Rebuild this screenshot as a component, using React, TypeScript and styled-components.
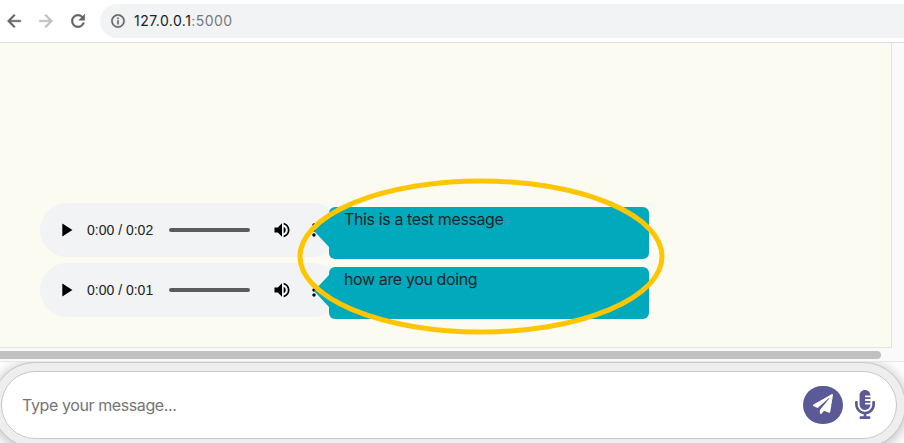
import React from 'react';
import styled, { createGlobalStyle } from 'styled-components';
import { FaPaperPlane, FaMicrophoneAlt } from 'react-icons/fa';
import {
  MdArrowBack,
  MdArrowForward,
  MdRefresh,
  MdInfoOutline,
  MdPlayArrow,
  MdVolumeUp,
  MdMoreVert,
} from 'react-icons/md';

const GlobalStyle = createGlobalStyle`
  * { box-sizing: border-box; }
  html, body { margin: 0; padding: 0; overflow: hidden; background: #fff; }
  body { font-family: Inter, "Liberation Sans", sans-serif; }
`;

const Page = styled.div`
  width: 904px;
  height: 443px;
  overflow: hidden;
  display: flex;
  flex-direction: column;
`;

const Toolbar = styled.header`
  flex: none;
  height: 43px;
  padding: 4px 0 4px 4px;
  display: flex;
  border-bottom: 1px solid #dadce0;
  background: #fff;
`;

const NavButton = styled.button<{ $muted?: boolean }>`
  width: 20px;
  height: 34px;
  margin-right: 12px;
  padding: 0;
  border: 0;
  background: none;
  display: grid;
  place-items: center;
  color: ${(p) => (p.$muted ? '#babcbe' : '#5f6368')};
  svg { display: block; }
  path:not([fill='none']) { stroke: currentColor; stroke-width: 0.6; }
`;

const AddressBar = styled.div`
  flex: 1;
  height: 34px;
  padding-left: 10px;
  display: flex;
  align-items: center;
  gap: 8px;
  border-radius: 17px 0 0 17px;
  background: #f1f3f4;
  color: #5f6368;
  path:not([fill='none']) { stroke: currentColor; stroke-width: 0.5; }
`;

const Url = styled.span`
  font-size: 14px;
  line-height: 20px;
  letter-spacing: 0.45px;
  color: #75797d;
  b { font-weight: 400; color: #202124; }
`;

const Scroller = styled.main`
  flex: none;
  height: 319px;
  background: #fafafa;
  border-bottom: 1px solid #e8e8e8;
`;

const Chat = styled.section`
  position: relative;
  width: 892px;
  height: 305px;
  padding: 160px 0 0 40px;
  display: flex;
  flex-direction: column;
  gap: 6px;
  background: #fbfbf2;
  border-right: 1px solid #e3e3e0;
  border-bottom: 1px solid #e3e3e0;
`;

const MessageRow = styled.div`
  display: flex;
  height: 54px;
`;

const Player = styled.div`
  width: 300px;
  height: 54px;
  padding-left: 15px;
  display: flex;
  align-items: center;
  border-radius: 27px;
  background: #f1f3f4;
  color: #000;
  svg { flex: none; display: block; }
`;

const Time = styled.span`
  width: 67px;
  margin: 0 15px 0 10px;
  font: 14px/20px "Liberation Sans", sans-serif;
  white-space: nowrap;
  color: #222;
`;

const Track = styled.div`
  width: 81px;
  height: 4px;
  margin-right: 22px;
  border-radius: 2px;
  background: #5b5b5c;
`;

const Menu = styled(MdMoreVert)`
  margin-left: 12px;
`;

const Bubble = styled.div`
  position: relative;
  width: 320px;
  height: 52px;
  margin: 4px 0 0 -11px;
  padding-left: 15px;
  border-radius: 6px;
  background: #00a9bc;
  color: #212529;
  font-size: 16px;
  line-height: 24px;
  letter-spacing: -0.38px;
  &::before {
    content: '';
    position: absolute;
    left: -15px;
    top: 8px;
    border: 16px solid transparent;
    border-left-width: 0;
    border-right: 15px solid #00a9bc;
  }
`;

const Highlight = styled.svg`
  position: absolute;
  left: 297px;
  top: 135px;
  pointer-events: none;
`;

const ScrollThumb = styled.div`
  width: 881px;
  height: 8px;
  margin-top: 3px;
  border-radius: 0 4px 4px 0;
  background: #c1c1c1;
`;

const ComposerFrame = styled.div`
  flex: none;
  width: 914px;
  height: 86px;
  margin-left: -8px;
  padding: 8px;
  border: 1px solid #c8c8c8;
  border-radius: 43px;
  background: #eee;
  box-shadow: 0 2px 14px rgba(0, 0, 0, 0.3);
`;

const Footer = styled.footer`
  flex: 1;
  overflow: hidden;
  background: #fff;
`;

const Composer = styled.div`
  height: 68px;
  padding: 0 21px 0 20px;
  display: flex;
  align-items: center;
  border: 1px solid #c8c8c8;
  border-radius: 34px;
  background: #fff;
`;

const Input = styled.input`
  flex: 1;
  min-width: 0;
  padding: 0;
  border: 0;
  outline: 0;
  background: none;
  font: 16px/24px Inter, "Liberation Sans", sans-serif;
  letter-spacing: -0.4px;
  &::placeholder { color: #757575; opacity: 1; }
`;

const SendButton = styled.button`
  width: 40px;
  height: 38px;
  padding: 0 0 3px;
  border: 0;
  border-radius: 19px;
  display: grid;
  place-items: center;
  background: #5b5996;
  color: #fff;
`;

const MicButton = styled.button`
  width: 20px;
  height: 29px;
  margin: 0 0 2px 12px;
  padding: 0;
  border: 0;
  background: none;
  color: #5b5996;
  svg { display: block; width: 20px; height: 29px; }
`;

const messages = [
  { text: 'This is a test message', time: '0:00 / 0:02' },
  { text: 'how are you doing', time: '0:00 / 0:01' },
];

export default function App() {
  return (
    <Page>
      <GlobalStyle />
      <Toolbar>
        <NavButton aria-label="Back"><MdArrowBack size={20} /></NavButton>
        <NavButton aria-label="Forward" $muted><MdArrowForward size={20} /></NavButton>
        <NavButton aria-label="Reload"><MdRefresh size={20} /></NavButton>
        <AddressBar>
          <MdInfoOutline size={16} />
          <Url><b>127.0.0.1</b>:5000</Url>
        </AddressBar>
      </Toolbar>
      <Scroller>
        <Chat>
          {messages.map((m) => (
            <MessageRow key={m.text}>
              <Player>
                <MdPlayArrow size={22} />
                <Time>{m.time}</Time>
                <Track />
                <MdVolumeUp size={20} />
                <Menu size={20} />
              </Player>
              <Bubble>{m.text}</Bubble>
            </MessageRow>
          ))}
          <Highlight width="368" height="157" viewBox="0 0 368 157">
            <ellipse cx="184" cy="78.5" rx="181" ry="75.5" fill="none" stroke="#ffc600" strokeWidth="5" />
          </Highlight>
        </Chat>
        <ScrollThumb />
      </Scroller>
      <Footer>
        <ComposerFrame>
          <Composer>
            <Input placeholder="Type your message..." />
            <SendButton aria-label="Send"><FaPaperPlane size={20} /></SendButton>
            <MicButton aria-label="Record"><FaMicrophoneAlt /></MicButton>
          </Composer>
        </ComposerFrame>
      </Footer>
    </Page>
  );
}
